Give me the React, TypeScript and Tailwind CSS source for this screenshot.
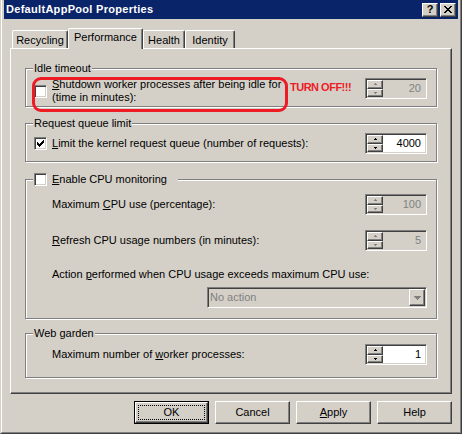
import type { ReactNode } from 'react';

const CHECK_ROWS = ['......X', '.....XX', 'X...XXX', 'XX.XXX.', 'XXXXX..', '.XXX...', '..X....'];

function Checkbox({ checked }: { checked?: boolean }) {
  return (
    <div className="flex h-[13px] w-[13px] shrink-0 items-center justify-center border border-t-[#808080] border-l-[#808080] border-b-white border-r-white bg-white shadow-[inset_1px_1px_0_#404040,inset_-1px_-1px_0_#d4d0c8]">
      {checked ? (
        <svg width="7" height="7" viewBox="0 0 7 7" shapeRendering="crispEdges">
          {CHECK_ROWS.flatMap((row, y) =>
            row.split('').map((c, x) => (c === 'X' ? <rect key={`${x}-${y}`} x={x} y={y} width="1" height="1" fill="black" /> : null)),
          )}
        </svg>
      ) : null}
    </div>
  );
}

function Arrow({ up, disabled }: { up?: boolean; disabled?: boolean }) {
  return (
    <svg width="3" height="2" viewBox="0 0 3 2" shapeRendering="crispEdges" fill={disabled ? '#808080' : '#000'}>
      {up ? <path d="M1 0h1v1h1v1H0V1h1z" /> : <path d="M0 0h3v1H2v1H1V1H0z" />}
    </svg>
  );
}

function SpinButton({ up, disabled }: { up?: boolean; disabled?: boolean }) {
  return (
    <div className="flex flex-1 items-center justify-center border border-t-white border-l-white border-b-[#404040] border-r-[#404040] bg-[#d4d0c8] shadow-[inset_-1px_-1px_0_#808080]">
      <Arrow up={up} disabled={disabled} />
    </div>
  );
}

function Spinner({ value, disabled }: { value: string; disabled?: boolean }) {
  return (
    <div
      className={`ml-auto flex h-[21px] w-[62px] shrink-0 border border-t-[#808080] border-l-[#808080] border-b-white border-r-white p-[1px] shadow-[inset_1px_1px_0_#404040,inset_-1px_-1px_0_#d4d0c8] ${
        disabled ? 'bg-[#d4d0c8] text-[#808080]' : 'bg-white text-black'
      }`}
    >
      <div className="flex w-[16px] flex-col">
        <SpinButton up disabled={disabled} />
        <SpinButton disabled={disabled} />
      </div>
      <span className="flex-1 pr-[4px] text-right leading-[17px]">{value}</span>
    </div>
  );
}

function Group({ legend, className, children }: { legend: ReactNode; className: string; children: ReactNode }) {
  return (
    <div className={`relative shrink-0 border border-[#808080] shadow-[inset_1px_1px_0_white,1px_1px_0_white] ${className}`}>
      <div className="absolute -top-[7px] left-[7px] bg-[#d4d0c8] px-[1px]">{legend}</div>
      {children}
    </div>
  );
}

function Tab({ children, width, selected }: { children: ReactNode; width: string; selected?: boolean }) {
  return (
    <div
      className={`flex justify-center rounded-t-[2px] border-t border-l border-r border-t-white border-l-white border-r-[#404040] bg-[#d4d0c8] shadow-[inset_-1px_0_0_#808080] ${width} ${
        selected ? 'relative z-10 -mb-[1px] h-[21px] pt-[2px]' : 'h-[18px] pt-[3px]'
      }`}
    >
      {children}
    </div>
  );
}

function Button({ children, isDefault }: { children: ReactNode; isDefault?: boolean }) {
  return (
    <div className={`flex h-[23px] w-[75px] ${isDefault ? 'border border-black' : ''}`}>
      <div className="flex flex-1 border border-t-white border-l-white border-b-[#404040] border-r-[#404040] p-[2px] shadow-[inset_-1px_-1px_0_#808080]">
        <div className={`flex flex-1 items-center justify-center ${isDefault ? 'border border-dotted border-black' : ''}`}>{children}</div>
      </div>
    </div>
  );
}

function CaptionButton({ children }: { children: ReactNode }) {
  return (
    <div className="flex h-[14px] w-[16px] items-center justify-center border border-t-white border-l-white border-b-[#404040] border-r-[#404040] bg-[#d4d0c8] shadow-[inset_-1px_-1px_0_#808080]">
      {children}
    </div>
  );
}

export default function App() {
  return (
    <div className="h-[434px] w-[462px] overflow-hidden bg-[#d4d0c8] font-['Liberation_Sans',Arial,sans-serif] text-[11px] leading-[13px] text-black">
      <div className="flex h-full flex-col border-r border-b border-l border-r-[#404040] border-b-[#404040] border-l-[#d4d0c8]">
        <div className="flex flex-1 flex-col border-r border-b border-l border-r-[#808080] border-b-[#808080] border-l-white px-[2px]">
          {/* caption */}
          <div className="flex h-[19px] shrink-0 items-center bg-[#0a246a] px-[2px]">
            <span className="flex-1 font-bold tracking-[0.3px] text-white">DefaultAppPool Properties</span>
            <div className="flex gap-[2px]">
              <CaptionButton>
                <span className="text-[11px] font-bold leading-[11px]">?</span>
              </CaptionButton>
              <CaptionButton>
                <svg width="8" height="7" viewBox="0 0 8 7" shapeRendering="crispEdges">
                  <path d="M0 0h2v1h1v1h2V1h1V0h2v1H7v1H6v1H5v1h1v1h1v1h1v1H6V6H5V5H3v1H2v1H0V6h1V5h1V4h1V3H2V2H1V1H0z" fill="#000" />
                </svg>
              </CaptionButton>
            </div>
          </div>

          <div className="flex flex-1 flex-col px-[6px] pt-[9px]">
            {/* tabs */}
            <div className="flex h-[20px] shrink-0 items-end pl-[2px]">
              <Tab width="w-[56px]">Recycling</Tab>
              <Tab width="w-[75px]" selected>
                Performance
              </Tab>
              <Tab width="w-[42px]">Health</Tab>
              <Tab width="w-[50px]">Identity</Tab>
            </div>

            {/* tab page */}
            <div className="flex h-[346px] shrink-0 flex-col border border-t-white border-l-white border-b-[#404040] border-r-[#404040] px-[14px] shadow-[inset_-1px_-1px_0_#808080]">
              <Group legend="Idle timeout" className="mt-[19px] h-[39px]">
                <div className="flex items-start pl-[8px] pr-[9px] pt-[9px]">
                  <div className="flex w-[256px] shrink-0 items-center gap-[5px]">
                    <Checkbox />
                    <span>
                      <u>S</u>hutdown worker processes after being idle for
                      <br />
                      (time in minutes):
                    </span>
                  </div>
                  <span className="mt-[3px] font-bold tracking-[-0.5px] text-[#ed1c24]">TURN OFF!!!</span>
                  <Spinner value="20" disabled />
                </div>
                {/* annotation drawn over the screenshot */}
                <div className="pointer-events-none absolute left-[6px] top-[8px] z-10 h-[35px] w-[256px] rounded-[9px] border-[3px] border-[#ed1c24]" />
              </Group>

              <Group legend="Request queue limit" className="mt-[16px] h-[39px]">
                <div className="flex items-center gap-[5px] pl-[8px] pr-[9px] pt-[9px]">
                  <Checkbox checked />
                  <span>
                    <u>L</u>imit the kernel request queue (number of requests):
                  </span>
                  <Spinner value="4000" />
                </div>
              </Group>

              <Group
                legend={
                  <div className="flex w-[143px] items-center gap-[5px] py-0">
                    <Checkbox />
                    <span>
                      <u>E</u>nable CPU monitoring
                    </span>
                  </div>
                }
                className="mt-[17px] h-[140px]"
              >
                <div className="flex flex-col pl-[26px] pr-[9px] pt-[14px]">
                  <div className="flex h-[21px] items-center">
                    <span>
                      Maximum <u>C</u>PU use (percentage):
                    </span>
                    <Spinner value="100" disabled />
                  </div>
                  <div className="mt-[15px] flex h-[21px] items-center">
                    <span>
                      <u>R</u>efresh CPU usage numbers (in minutes):
                    </span>
                    <Spinner value="5" disabled />
                  </div>
                  <span className="mt-[17px]">
                    Action <u>p</u>erformed when CPU usage exceeds maximum CPU use:
                  </span>
                  <div className="mt-[6px] flex h-[21px] w-[220px] self-end border border-t-[#808080] border-l-[#808080] border-b-white border-r-white bg-[#d4d0c8] p-[1px] shadow-[inset_1px_1px_0_#404040,inset_-1px_-1px_0_#d4d0c8]">
                    <span className="flex-1 pl-[1px] leading-[17px] text-[#808080]">No action</span>
                    <div className="flex w-[16px] items-center justify-center border border-t-white border-l-white border-b-[#404040] border-r-[#404040] shadow-[inset_-1px_-1px_0_#808080]">
                      <svg width="7" height="4" viewBox="0 0 7 4" shapeRendering="crispEdges" fill="#808080">
                        <path d="M0 0h7v1H6v1H5v1H4v1H3V3H2V2H1V1H0z" />
                      </svg>
                    </div>
                  </div>
                </div>
              </Group>

              <Group legend="Web garden" className="mt-[14px] h-[45px]">
                <div className="mt-[10px] flex h-[21px] items-center pl-[26px] pr-[9px]">
                  <span>
                    Maximum number of <u>w</u>orker processes:
                  </span>
                  <Spinner value="1" />
                </div>
              </Group>
            </div>

            {/* dialog buttons */}
            <div className="mt-[7px] flex justify-end gap-[6px]">
              <Button isDefault>OK</Button>
              <Button>Cancel</Button>
              <Button>
                <span>
                  <u>A</u>pply
                </span>
              </Button>
              <Button>Help</Button>
            </div>
          </div>
        </div>
      </div>
    </div>
  );
}
